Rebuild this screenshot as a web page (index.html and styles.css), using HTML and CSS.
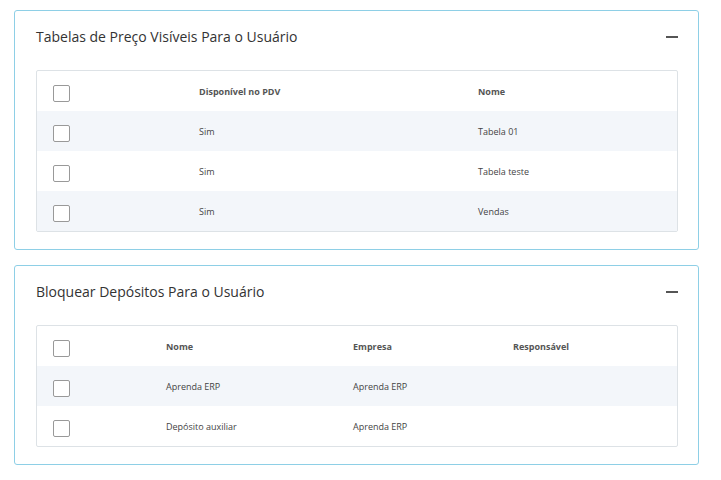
FILE: index.html
```html
<!DOCTYPE html>
<html lang="pt-BR">
<head>
    <meta charset="UTF-8">
    <title>Usuário - Permissões</title>
    <link rel="stylesheet" href="styles.css">
</head>
<body>
    <div class="panel">
        <div class="panel-head">
            <h2>Tabelas de Preço Visíveis Para o Usuário</h2>
            <span class="collapse"></span>
        </div>
        <div class="grid grid-precos">
            <div class="row head">
                <div class="cell"><span class="check"></span></div>
                <div class="cell">Disponível no PDV</div>
                <div class="cell">Nome</div>
            </div>
            <div class="row odd">
                <div class="cell"><span class="check"></span></div>
                <div class="cell">Sim</div>
                <div class="cell">Tabela 01</div>
            </div>
            <div class="row">
                <div class="cell"><span class="check"></span></div>
                <div class="cell">Sim</div>
                <div class="cell">Tabela teste</div>
            </div>
            <div class="row odd">
                <div class="cell"><span class="check"></span></div>
                <div class="cell">Sim</div>
                <div class="cell">Vendas</div>
            </div>
        </div>
    </div>

    <div class="panel">
        <div class="panel-head">
            <h2>Bloquear Depósitos Para o Usuário</h2>
            <span class="collapse"></span>
        </div>
        <div class="grid grid-depositos">
            <div class="row head">
                <div class="cell"><span class="check"></span></div>
                <div class="cell">Nome</div>
                <div class="cell">Empresa</div>
                <div class="cell">Responsável</div>
            </div>
            <div class="row odd">
                <div class="cell"><span class="check"></span></div>
                <div class="cell">Aprenda ERP</div>
                <div class="cell">Aprenda ERP</div>
                <div class="cell"></div>
            </div>
            <div class="row">
                <div class="cell"><span class="check"></span></div>
                <div class="cell">Depósito auxiliar</div>
                <div class="cell">Aprenda ERP</div>
                <div class="cell"></div>
            </div>
        </div>
    </div>
</body>
</html>
```

FILE: styles.css
```css
body {
    margin: 10px 22px 0 14px;
    font-family: "Open Sans", sans-serif;
    background: #fff;
    color: #444;
}
.panel {
    border: 1px solid #8ecfe6;
    border-radius: 3px;
    padding: 0 20px 17px 21px;
    margin-bottom: 15px;
}
.panel-head {
    display: flex;
    align-items: center;
    justify-content: space-between;
    padding: 16px 0 23px;
    height: 20px;
}
.panel-head h2 {
    margin: 0;
    font-size: 14px;
    line-height: 20px;
    font-weight: 400;
    color: #333;
}
.collapse {
    width: 12px;
    height: 2px;
    background: #555;
}
.grid {
    border: 1px solid #dde2e6;
    border-radius: 2px;
}
.row {
    display: grid;
    height: 40px;
    align-items: center;
    font-size: 9px;
}
.row.head {
    font-weight: 700;
    color: #555;
}
.row.odd { background: #f3f6fa; }
.grid-precos .row { grid-template-columns: 162px 279px 1fr; }
.grid-depositos .row { grid-template-columns: 129px 187px 160px 1fr; }
.cell:first-child { padding-left: 16px; }
.check {
    display: block;
    width: 15px;
    height: 15px;
    margin-top: 4px;
    border: 1px solid #999;
    border-radius: 2px;
    background: #fff;
}
```
